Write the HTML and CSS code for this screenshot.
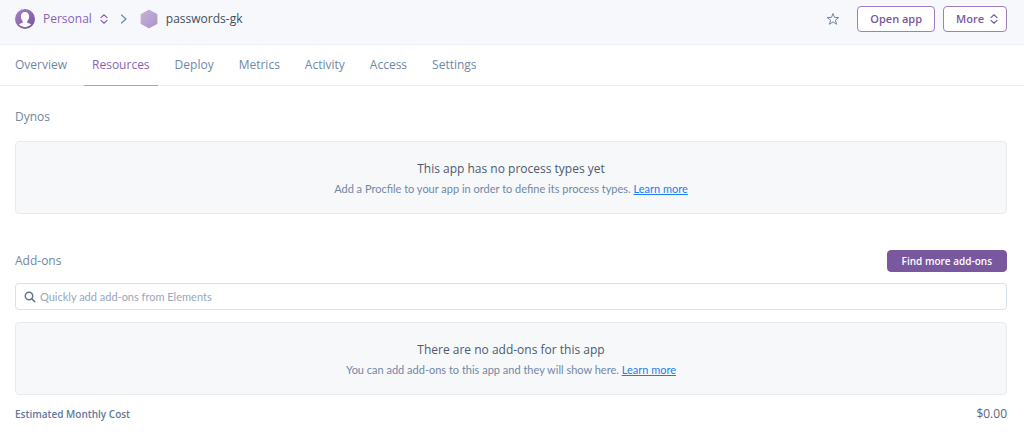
FILE: index.html
```html
<!DOCTYPE html>
<html lang="en">
<head>
<meta charset="utf-8">
<meta name="viewport" content="width=device-width, initial-scale=1">
<title>passwords-gk · Resources</title>
<link rel="stylesheet" href="styles.css">
</head>
<body>
<header class="topbar">
  <nav class="breadcrumb" aria-label="Breadcrumb">
    <button class="account" type="button">
      <svg class="avatar" viewBox="0 0 20 20" width="20" height="20" aria-hidden="true">
        <defs><linearGradient id="avatar-fill" x1="0" y1="0" x2="1" y2="1"><stop offset="0" stop-color="#a583c6"/><stop offset="1" stop-color="#75519f"/></linearGradient></defs>
        <circle cx="10" cy="10" r="10" fill="url(#avatar-fill)"/>
        <path d="M10 3C7.300 3 5.900 5 5.900 7.600c0 2 .8 3.800 1.900 4.700v1.300c-.5.700-2.600.9-4 1.700A8.300 8.300 0 0 0 10 18.300a8.300 8.300 0 0 0 6.200-3c-1.400-.8-3.500-1-4-1.700v-1.300c1.100-.9 1.900-2.700 1.900-4.700C14.100 5 12.700 3 10 3z" fill="#fff"/>
      </svg>
      <span>Personal</span>
      <svg class="sorter" viewBox="0 0 8 10" width="8" height="10" aria-hidden="true"><path d="M1 3.600 4 .8l3 2.800M1 6.400l3 2.800 3-2.800"/></svg>
    </button>
    <svg class="separator" viewBox="0 0 8 10" width="8" height="10" aria-hidden="true"><path d="M1.500 1 6 5 1.500 9"/></svg>
    <a class="app" href="#app">
      <svg viewBox="0 0 18 20" width="18" height="20" aria-hidden="true">
        <defs><linearGradient id="app-fill" x1="0" y1="0" x2="1" y2="1"><stop offset="0" stop-color="#c6b2dc"/><stop offset="1" stop-color="#ab94c7"/></linearGradient></defs>
        <path d="M9 1.300 16.800 5.600v8.800L9 18.700 1.200 14.400V5.600z" fill="url(#app-fill)" stroke="url(#app-fill)" stroke-width="1.200" stroke-linejoin="round"/>
      </svg>
      <span>passwords-gk</span>
    </a>
  </nav>
  <div class="actions">
    <button class="favorite" type="button" aria-label="Favorite">
      <svg viewBox="0 0 14 14" width="14" height="14" aria-hidden="true"><path d="m7 1.500 1.500 3.900 4.300.1-3.400 2.600 1.200 4.200L7 9.900l-3.600 2.400 1.200-4.200L1.200 5.500l4.300-.1z"/></svg>
    </button>
    <button class="button" type="button">Open app</button>
    <button class="button menu" type="button">More
      <svg class="sorter" viewBox="0 0 8 10" width="8" height="10" aria-hidden="true"><path d="M1 3.600 4 .8l3 2.800M1 6.400l3 2.800 3-2.800"/></svg>
    </button>
  </div>
</header>
<nav class="tabs" aria-label="App sections">
  <a class="tab" href="#overview">Overview</a>
  <a class="tab active" href="#resources" aria-current="page">Resources</a>
  <a class="tab" href="#deploy">Deploy</a>
  <a class="tab" href="#metrics">Metrics</a>
  <a class="tab" href="#activity">Activity</a>
  <a class="tab" href="#access">Access</a>
  <a class="tab" href="#settings">Settings</a>
</nav>
<main class="content">
  <section class="dynos">
    <div class="section-head"><h2>Dynos</h2></div>
    <div class="panel">
      <h3>This app has no process types yet</h3>
      <p>Add a Procfile to your app in order to define its process types. <a href="#procfile">Learn more</a></p>
    </div>
  </section>
  <section class="addons">
    <div class="section-head">
      <h2>Add-ons</h2>
      <button class="button primary" type="button">Find more add-ons</button>
    </div>
    <div class="search">
      <svg viewBox="0 0 12 12" width="12" height="12" aria-hidden="true"><circle cx="5" cy="5" r="3.700"/><path d="m7.800 7.800 3 3"/></svg>
      <input type="text" aria-label="Add add-ons" placeholder="Quickly add add-ons from Elements">
    </div>
    <div class="panel">
      <h3>There are no add-ons for this app</h3>
      <p>You can add add-ons to this app and they will show here. <a href="#addons">Learn more</a></p>
    </div>
  </section>
  <div class="cost"><strong>Estimated Monthly Cost</strong><span>$0.00</span></div>
</main>
</body>
</html>
```
FILE: styles.css
```css
* { box-sizing: border-box; }
body {
  margin: 0;
  background: #fff;
  color: #7088a5;
  font: 12px/18px "Open Sans", "Noto Sans", sans-serif;
}
h2, h3, p { margin: 0; font-weight: 400; }
button, input { font: inherit; }
button { cursor: pointer; }
svg { display: block; flex: none; }

.topbar {
  display: flex;
  align-items: center;
  justify-content: space-between;
  padding: 6px 17px 12px 15px;
  background: #f7f8fc;
  border-bottom: 1px solid #eceff5;
}
.breadcrumb, .account, .app, .actions { display: flex; align-items: center; }
.breadcrumb { gap: 12px; }
.account { gap: 8px; padding: 0; border: 0; background: none; color: #8a63b3; }
.app { gap: 8px; color: #3f4d60; text-decoration: none; }
.sorter, .separator { fill: none; stroke: currentColor; stroke-width: 1.2; stroke-linecap: round; stroke-linejoin: round; }
.separator { color: #7088a5; }
.actions { gap: 8px; }
.favorite { padding: 0; margin-right: 9px; border: 0; background: none; }
.favorite svg { fill: none; stroke: #7088a5; stroke-width: 1; stroke-linejoin: miter; }
.button {
  display: flex;
  align-items: center;
  gap: 6px;
  padding: 3px 12px;
  border: 1px solid #9d7fc0;
  border-radius: 4px;
  background: #fff;
  color: #79589f;
  font-size: 11px;
  font-weight: 600;
}
.menu { padding-right: 8px; }
.primary { padding: 1px 14px; border-color: #79589f; background: #79589f; color: #fff; font-size: 10px; }

.tabs {
  display: flex;
  gap: 9px;
  padding: 0 7px;
  border-bottom: 1px solid #e8edf2;
}
.tab { padding: 11px 8px; margin-bottom: -1px; border-bottom: 1px solid transparent; color: #7088a5; text-decoration: none; }
.active { color: #8a63b3; border-color: #b39dd0; }

.content { padding: 20px 17px 10px 15px; }
.section-head { display: flex; align-items: center; justify-content: space-between; min-height: 22px; }
.section-head h2 { font-size: 12px; }
.dynos .section-head { margin-bottom: 13px; }
.addons { margin-top: 36px; }
.addons .section-head { margin-bottom: 11px; }
.panel {
  padding: 17px 12px 14px;
  border: 1px solid #e8eaee;
  border-radius: 4px;
  background: #f7f8fa;
  text-align: center;
}
.panel h3 { color: #4b5b70; font-size: 12px; line-height: 20px; }
.panel p { font-family: Lato, sans-serif; font-size: 11px; line-height: 20px; }
.panel a { color: #1a7ff0; }
.search {
  display: flex;
  align-items: center;
  gap: 4px;
  margin-bottom: 12px;
  padding: 0 8px;
  border: 1px solid #d8e0ee;
  border-radius: 4px;
}
.search svg { fill: none; stroke: #62748e; stroke-width: 1.5; stroke-linecap: round; }
.search input { flex: 1; min-width: 0; height: 25px; padding: 0; border: 0; outline: 0; background: none; color: #4b5b70; font-family: Lato, sans-serif; font-size: 11px; }
.search input::placeholder { color: #98a7bd; opacity: 1; }
.cost { display: flex; align-items: center; justify-content: space-between; margin-top: 10px; }
.cost strong { color: #62789a; font-size: 10px; font-weight: 600; }
.cost span { color: #596579; }
```
